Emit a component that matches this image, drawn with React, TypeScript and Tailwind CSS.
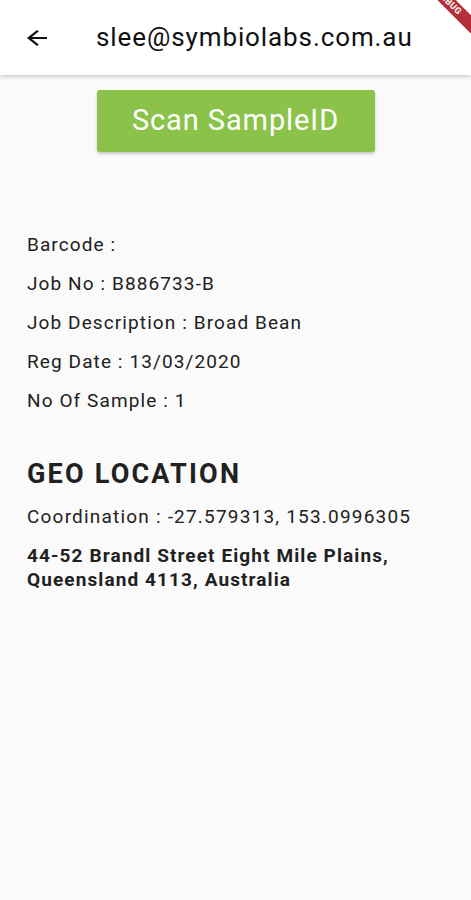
const details = [
  "Barcode :",
  "Job No : B886733-B",
  "Job Description : Broad Bean",
  "Reg Date : 13/03/2020",
  "No Of Sample : 1",
];

function BackArrow() {
  return (
    <svg viewBox="0 0 24 24" width={30} height={24} preserveAspectRatio="none" className="text-[#111]">
      <path fill="currentColor" d="M20 11H7.83l5.59-5.59L12 4l-8 8 8 8 1.41-1.41L7.83 13H20v-2z" />
    </svg>
  );
}

export default function App() {
  return (
    <div className="relative min-h-[900px] bg-[#fafafa] overflow-hidden font-['Roboto',sans-serif] text-[#212121]">
      {/* app bar */}
      <header className="h-[75px] bg-white flex items-center shadow-[0_2px_4px_rgba(0,0,0,0.18)] relative z-10">
        <button className="w-[74px] h-full flex items-center justify-center">
          <BackArrow />
        </button>
        <h1 className="ml-[22px] text-[26px] tracking-[0.9px] text-[#111]">slee@symbiolabs.com.au</h1>
      </header>

      {/* debug banner */}
      <div className="absolute top-[-4px] right-[-38px] w-[120px] h-[13px] bg-[#b3303a] rotate-45 z-20 flex items-center justify-center">
        <span className="text-[9px] font-bold text-white tracking-wider leading-none">DEBUG</span>
      </div>

      <div className="flex justify-center pt-[15px]">
        <button className="w-[278px] h-[62px] bg-[#8bc34a] rounded-[3px] text-white text-[29px] tracking-[0.9px] shadow-[0_2px_3px_rgba(0,0,0,0.2)]">
          Scan SampleID
        </button>
      </div>

      <div className="px-[27px] pt-[82px] tracking-[1.1px]">
        <div className="flex flex-col gap-[17px]">
          {details.map((d) => (
            <p key={d} className="text-[19px] leading-[22px]">
              {d}
            </p>
          ))}
        </div>

        <h2 className="mt-[47px] text-[27px] tracking-[2.2px] font-bold leading-[30px]">GEO LOCATION</h2>
        <p className="mt-[17px] text-[19px] tracking-[1.2px] leading-[22px]">Coordination : -27.579313, 153.0996305</p>
        <p className="mt-[16px] text-[19px] font-bold leading-[24px]">
          44-52 Brandl Street Eight Mile Plains,
          <br />
          Queensland 4113, Australia
        </p>
      </div>
    </div>
  );
}
